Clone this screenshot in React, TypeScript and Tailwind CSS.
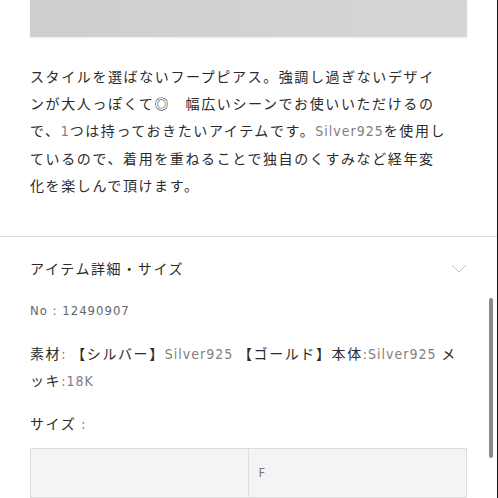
const jp = "font-['Noto_Sans_CJK_JP','Noto_Sans',sans-serif]"
const narrow = "font-['Liberation_Sans_Narrow','DejaVu_Sans_Condensed','Roboto',sans-serif]"

function Latin({ children }: { children: React.ReactNode }) {
  return <span className={`${narrow} text-[#808080] tracking-[1px]`}>{children}</span>
}

function ChevronDown() {
  return (
    <svg width="16" height="9" viewBox="0 0 16 9" fill="none">
      <path d="M1 1l7 7 7-7" stroke="#c4c4c4" strokeWidth="1" />
    </svg>
  )
}

export default function App() {
  return (
    <div className={`relative w-[498px] h-[498px] overflow-hidden bg-white border-r border-[#111] ${jp} text-[#2b2b2b]`}>
      <div className="mx-[30px] h-[37px] bg-gradient-to-r from-[#cfcecc] to-[#d8d6d4] shadow-[0_1px_2px_rgba(0,0,0,0.08)]" />

      <p className="mx-[30px] mt-[26px] text-[14px] leading-[27px] tracking-[1.6px] whitespace-nowrap">
        スタイルを選ばないフープピアス。強調し過ぎないデザイ<br />
        ンが大人っぽくて◎　幅広いシーンでお使いいただけるの<br />
        で、<Latin>1</Latin>つは持っておきたいアイテムです。<Latin>Silver925</Latin>を使用し<br />
        ているので、着用を重ねることで独自のくすみなど経年変<br />
        化を楽しんで頂けます。
      </p>

      <div className="mt-[37px] border-t border-[#dcdcdc]" />

      <div className="mx-[30px] pt-[18px] flex items-center justify-between">
        <h2 className="text-[14px] leading-[27px] tracking-[1.6px]">アイテム詳細・サイズ</h2>
        <ChevronDown />
      </div>

      <div className={`mx-[30px] mt-[15px] ${narrow} text-[13px] leading-[27px] tracking-[1px] text-[#666]`}>
        No : 12490907
      </div>

      <p className="mx-[30px] mt-[16px] text-[14px] leading-[26px] tracking-[1.6px] whitespace-nowrap">
        素材<Latin>:</Latin> 【シルバー】<Latin>Silver925</Latin> 【ゴールド】本体<Latin>:Silver925</Latin> メ<br />
        ッキ<Latin>:18K</Latin>
      </p>

      <div className="mx-[30px] mt-[16px] text-[14px] leading-[27px] tracking-[1.6px]">
        サイズ <Latin>:</Latin>
      </div>

      <div className="mx-[30px] mt-[10px] grid grid-cols-2 border border-[#dedede] bg-[#f4f4f4] h-[50px]">
        <div className="border-r border-[#dedede]" />
        <div className={`flex items-center pl-[10px] ${narrow} text-[13px] text-[#777]`}>F</div>
      </div>

      <div className="absolute right-[4px] top-[298px] h-[160px] w-[4px] rounded-full bg-[#8a8a8a]" />
    </div>
  )
}
